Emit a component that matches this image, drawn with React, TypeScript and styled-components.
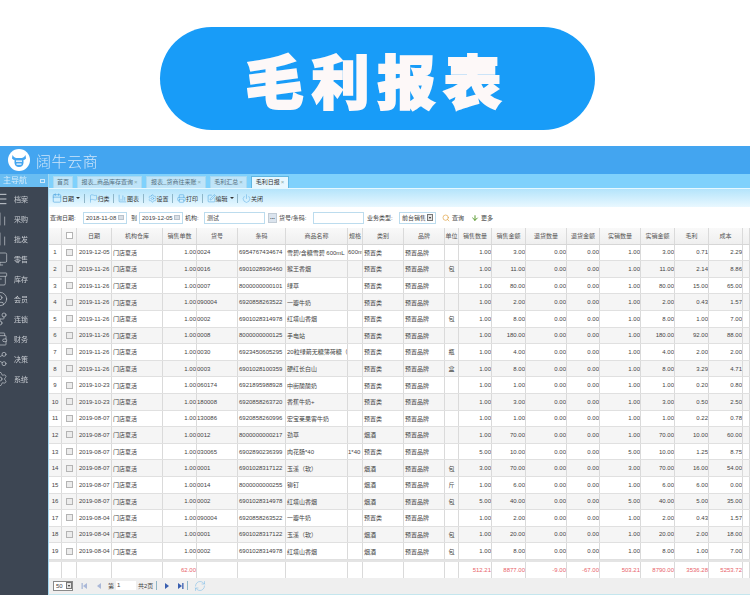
import React from "react";
import styled, { createGlobalStyle } from "styled-components";
import { Calendar, Flag, ChartColumn, Settings, Printer, SquarePen, Power, Search, ArrowDown, RefreshCw, AlignJustify, Monitor, Archive, CircleUser, Share2, Wallet, GitFork, ChartNoAxesColumn } from "lucide-react";

const Global = createGlobalStyle`
  html, body { margin: 0; padding: 0; background: #fff; }
  body { font-family: "Liberation Sans", "Noto Sans CJK SC", sans-serif; }
  * { box-sizing: border-box; }
`;

const Page = styled.div`
  width: 750px;
  height: 609px;
  overflow: hidden;
  background: #fff;
`;
const Banner = styled.div`
  height: 146px;
  padding: 27px 0 0 160px;
`;
const Pill = styled.div`
  width: 435px;
  height: 103px;
  border-radius: 52px;
  background: #189cf8;
  color: #fdf8f8;
  display: flex;
  align-items: center;
  justify-content: center;
  font: 900 58px/1 "Noto Sans CJK SC", sans-serif;
  letter-spacing: 8px;
  -webkit-text-stroke: 2px #fdf8f8;
`;
const Shell = styled.div`
  filter: blur(0.4px);
  font-size: 6px;
  color: #444;
`;
const Header = styled.div`
  height: 28px;
  background: #43a5f0;
  display: flex;
  align-items: center;
  padding-left: 8px;
  gap: 6px;
`;
const LogoText = styled.div`
  font: 300 15px/1 "Noto Sans CJK SC", sans-serif;
  letter-spacing: 0.6px;
  color: #cfe6fa;
`;
const Body = styled.div`
  display: flex;
  height: 421px;
`;
const SideCol = styled.div`
  width: 48px;
  flex: none;
  display: flex;
  flex-direction: column;
`;
const SideHead = styled.div`
  height: 13px;
  background: #69bdf2;
  color: #d5ecfb;
  font-size: 8px;
  line-height: 13px;
  padding-left: 3px;
  display: flex;
  align-items: center;
  justify-content: space-between;
  padding-right: 3px;
`;
const SideBox = styled.span`
  width: 5px;
  height: 4px;
  border: 1px solid #cfe8fa;
`;
const SideMenu = styled.div`
  flex: 1;
  background: #3d4653;
  padding-top: 1.5px;
`;
const SideItem = styled.div`
  height: 20.1px;
  display: flex;
  align-items: center;
  gap: 6px;
  color: #c9cdd3;
  font-size: 7px;
  overflow: hidden;
  svg { margin-left: -8px; flex: none; }
`;
const Main = styled.div`
  flex: 1;
  min-width: 0;
  border-left: 1px solid #a4d8f2;
  border-bottom: 1px solid #c4e6ee;
  display: flex;
  flex-direction: column;
`;
const TabStrip = styled.div`
  height: 14px;
  background: #7fd1fc;
  display: flex;
  align-items: flex-end;
  gap: 4px;
  padding-left: 4px;
`;
const Tab = styled.div<{ $w: number; $active?: boolean }>`
  width: ${(p) => p.$w}px;
  height: 12px;
  text-align: center;
  white-space: nowrap;
  color: ${(p) => (p.$active ? "#333" : "#55707f")};
  background: ${(p) => (p.$active ? "#e6f7ff" : "#bfe4f8")};
  border: 1px solid ${(p) => (p.$active ? "#5fb6e0" : "#a8d9f2")};
  border-bottom: 0;
  line-height: 10px;
`;
const TabX = styled.span`
  color: #8aa;
  margin-left: 1px;
`;
const Toolbar = styled.div`
  height: 19px;
  border-top: 1px solid #e6f8ff;
  background: linear-gradient(#b4e4fb, #e9f8ff);
  display: flex;
  align-items: center;
  padding-left: 3px;
  color: #333;
`;
const Tool = styled.div`
  display: flex;
  align-items: center;
  svg { flex: none; }
`;
const Caret = styled.span`
  width: 0;
  height: 0;
  margin-left: 2px;
  border: 2px solid transparent;
  border-top: 2.5px solid #333;
  border-bottom: 0;
`;
const Sep = styled.span`
  width: 1px;
  height: 9px;
  background: #8fb6c8;
  margin: 0 ${(p: { $m?: number }) => p.$m ?? 4}px 0 ${(p: { $m?: number }) => p.$m ?? 3.5}px;
`;
const Filter = styled.div`
  height: 21px;
  background: #fff;
  display: flex;
  align-items: center;
  padding-left: 1px;
  color: #444;
`;
const Label = styled.span<{ $ml?: number; $w?: number }>`
  margin-left: ${(p) => p.$ml ?? 0}px;
  width: ${(p) => (p.$w ? `${p.$w}px` : "auto")};
  white-space: nowrap;
`;
const Field = styled.div<{ $w: number; $ml?: number }>`
  width: ${(p) => p.$w}px;
  margin-left: ${(p) => p.$ml ?? 0}px;
  height: 12px;
  border: 1px solid #bcdcee;
  background: #fff;
  display: flex;
  align-items: center;
  justify-content: space-between;
  padding: 0 2px;
  white-space: nowrap;
`;
const DateIcon = styled.span`
  width: 6px;
  height: 5px;
  background: #d9dee4;
  border: 1px solid #b8c2cc;
`;
const DotsBtn = styled.span`
  width: 9px;
  height: 10px;
  margin-left: 3px;
  background: #dbe4ee;
  border: 1px solid #c2ccd6;
  color: #345;
  text-align: center;
  line-height: 6px;
  font-weight: bold;
`;
const DropBtn = styled.span`
  width: 6px;
  height: 7px;
  background: #e4e4e4;
  border: 1px solid #777;
  display: flex;
  align-items: center;
  justify-content: center;
  &::after {
    content: "";
    border: 1.5px solid transparent;
    border-top: 2px solid #222;
    border-bottom: 0;
  }
`;
const Action = styled.div<{ $ml: number }>`
  margin-left: ${(p) => p.$ml}px;
  display: flex;
  align-items: center;
  gap: 2px;
  color: #444;
`;

const cols = "13px 15px 35px 51px 34px 41px 48px 62px 15px 41px 41px 14px 33px 34px 41px 33px 41px 34px 34px 34px 7px";

const HeadRow = styled.div`
  height: 16.6px;
  display: grid;
  grid-template-columns: ${cols};
  background: linear-gradient(#f9f9f9, #efefef);
  border-bottom: 1px solid #d6d6d6;
`;
const Row = styled.div<{ $alt: boolean }>`
  height: 16.6px;
  display: grid;
  grid-template-columns: ${cols};
  background: ${(p) => (p.$alt ? "#f5f5f5" : "#fff")};
  border-bottom: 1px solid #e0e0e0;
`;
const Total = styled.div`
  height: 18px;
  display: grid;
  grid-template-columns: ${cols};
  background: #fff;
  border-top: 2px solid #e4e4e4;
  color: #e8636b;
`;
const Cell = styled.div<{ $a?: "l" | "c" | "r"; $pl?: number }>`
  border-right: 1px solid #dadada;
  display: flex;
  align-items: center;
  justify-content: ${(p) => (p.$a === "r" ? "flex-end" : p.$a === "c" ? "center" : "flex-start")};
  padding-left: ${(p) => p.$pl ?? 0}px;
  white-space: nowrap;
  overflow: hidden;
  min-width: 0;
`;
const HeadCell = styled(Cell)`
  color: #555;
  justify-content: center;
`;
const Check = styled.span<{ $head?: boolean }>`
  width: 7px;
  height: 7px;
  border: 1px solid #b4b4b4;
  background: ${(p) => (p.$head ? "#fff" : "#ececec")};
`;
const Pager = styled.div`
  height: 16px;
  background: #efefef;
  display: flex;
  align-items: center;
  padding-left: 4px;
  color: #444;
`;
const PageField = styled.div`
  width: 20px;
  height: 9px;
  background: #fff;
  padding-left: 1px;
  margin: 0 2px 0 2px;
  line-height: 9px;
`;
const SizeSelect = styled.div`
  width: 20px;
  height: 10px;
  border: 1px solid #8a8a8a;
  background: #fff;
  display: flex;
  align-items: center;
  justify-content: space-between;
  padding-left: 2px;
`;
const PageIcon = styled.svg<{ $ml: number }>`
  margin-left: ${(p) => p.$ml}px;
  flex: none;
`;
const Refresh = styled(RefreshCw)`
  margin-left: 3px;
  flex: none;
`;

const TBLUE = "#3d9bdc";
const ICO = { size: 16, color: "#c9cdd3", strokeWidth: 1 };
const sideItems: [string, React.ReactNode][] = [
  ["档案", <AlignJustify key="a" {...ICO} strokeWidth={1.5} />],
  ["采购", <ChartNoAxesColumn key="b" {...ICO} />],
  ["批发", <ChartNoAxesColumn key="c" {...ICO} />],
  ["零售", <Monitor key="d" {...ICO} />],
  ["库存", <Archive key="e" {...ICO} />],
  ["会员", <CircleUser key="f" {...ICO} />],
  ["连锁", <GitFork key="g" {...ICO} />],
  ["财务", <Wallet key="h" {...ICO} />],
  ["决策", <Share2 key="i" {...ICO} />],
  ["系统", <Settings key="j" {...ICO} />],
];

const heads = ["", "", "日期", "机构仓库", "销售单数", "货号", "条码", "商品名称", "规格", "类别", "品牌", "单位", "销售数量", "销售金额", "退货数量", "退货金额", "实销数量", "实销金额", "毛利", "成本", ""];

type D = [string, string, string, string, string, string, string, string, string, string, string];
const P = "预置类", Y = "烟酒";
const data: D[] = [
  ["2019-12-05", "0024", "6954767434674", "雪碧/含糖雪碧 600mL", "600m", P, "", "1.00", "3.00", "0.71", "2.29"],
  ["2019-11-26", "0016", "6901028936460", "猴王香烟", "", P, "包", "1.00", "11.00", "2.14", "8.86"],
  ["2019-11-26", "0007", "8000000000101", "绿草", "", P, "", "1.00", "80.00", "15.00", "65.00"],
  ["2019-11-26", "090004", "6920858263522", "一瓣牛奶", "", P, "", "1.00", "2.00", "0.43", "1.57"],
  ["2019-11-26", "0002", "6901028314978", "红塔山香烟", "", P, "包", "1.00", "8.00", "1.00", "7.00"],
  ["2019-11-26", "0008", "8000000000125", "手电站", "", P, "", "1.00", "180.00", "92.00", "88.00"],
  ["2019-11-26", "0030", "6923450605295", "20粒绿箭无糖薄荷糖（", "", P, "瓶", "1.00", "4.00", "2.00", "2.00"],
  ["2019-11-26", "0003", "6901028100359", "硬红长白山", "", P, "盒", "1.00", "8.00", "3.29", "4.71"],
  ["2019-10-23", "060174", "6921895988928", "中街酸酸奶", "", P, "", "1.00", "1.00", "0.20", "0.80"],
  ["2019-10-23", "180008", "6920858263720", "香蕉牛奶+", "", P, "", "1.00", "3.00", "0.50", "2.50"],
  ["2019-08-07", "130086", "6920858260996", "宏宝莱果客牛奶", "", P, "", "1.00", "1.00", "0.22", "0.78"],
  ["2019-08-07", "0012", "8000000000217", "劲草", "", Y, "", "1.00", "70.00", "10.00", "60.00"],
  ["2019-08-07", "030065", "6902890236399", "肉花肠*40", "1*40", P, "", "5.00", "10.00", "1.25", "8.75"],
  ["2019-08-07", "0001", "6901028317122", "玉溪（软）", "", Y, "包", "3.00", "70.00", "16.00", "54.00"],
  ["2019-08-07", "0014", "8000000000255", "铆钉", "", Y, "斤", "1.00", "6.00", "6.00", "0.00"],
  ["2019-08-07", "0002", "6901028314978", "红塔山香烟", "", Y, "包", "5.00", "40.00", "5.00", "35.00"],
  ["2019-08-04", "090004", "6920858263522", "一瓣牛奶", "", P, "", "1.00", "2.00", "0.43", "1.57"],
  ["2019-08-04", "0001", "6901028317122", "玉溪（软）", "", Y, "包", "1.00", "20.00", "2.00", "18.00"],
  ["2019-08-04", "0002", "6901028314978", "红塔山香烟", "", Y, "包", "1.00", "8.00", "1.00", "7.00"],
];
const totals: Record<number, string> = { 4: "62.00", 12: "512.21", 13: "8877.00", 14: "-9.00", 15: "-67.00", 16: "503.21", 17: "8790.00", 18: "3536.28", 19: "5253.72" };

const Logo = () => (
  <svg width="22" height="22" viewBox="0 0 22 22">
    <circle cx="11" cy="11" r="11" fill="#fff" />
    <path d="M4.5 6 Q6 9 8 9 H14 Q16 9 17.500 6 L18 9.500 Q16.500 11 15.500 11 V14 Q15 18 11 18 Q7 18 6.500 14 V11 Q5.500 11 4 9.500 Z" fill="#43a5f0" />
    <rect x="8" y="11.500" width="6" height="1.300" fill="#fff" />
    <rect x="8.500" y="14.500" width="5" height="1.200" fill="#fff" />
  </svg>
);

const Tri = ({ ml, flip, bar, color }: { ml: number; flip?: boolean; bar?: boolean; color: string }) => (
  <PageIcon $ml={ml} width="7" height="8" viewBox="0 0 7 8">
    <g transform={flip ? "translate(7 0) scale(-1 1)" : undefined} fill={color}>
      <path d="M1 1 L5 4 L1 7 Z" />
      {bar && <rect x="5.200" y="1" width="1.300" height="6" />}
    </g>
  </PageIcon>
);

export default function App() {
  return (
    <Page>
      <Global />
      <Banner>
        <Pill>毛利报表</Pill>
      </Banner>
      <Shell>
        <Header>
          <Logo />
          <LogoText>阔牛云商</LogoText>
        </Header>
        <Body>
          <SideCol>
            <SideHead>
              主导航
              <SideBox />
            </SideHead>
            <SideMenu>
              {sideItems.map(([t, icon]) => (
                <SideItem key={t}>
                  {icon}
                  {t}
                </SideItem>
              ))}
            </SideMenu>
          </SideCol>
          <Main>
            <TabStrip>
              <Tab $w={20}>首页</Tab>
              <Tab $w={65}>报表_商品库存查询<TabX>×</TabX></Tab>
              <Tab $w={60}>报表_货商往来账<TabX>×</TabX></Tab>
              <Tab $w={37}>毛利汇总<TabX>×</TabX></Tab>
              <Tab $w={38} $active>毛利日报<TabX>×</TabX></Tab>
            </TabStrip>
            <Toolbar>
              <Tool><Calendar size={10} color={TBLUE} strokeWidth={1.3} />日期<Caret /></Tool>
              <Sep />
              <Tool><Flag size={9} color={TBLUE} strokeWidth={1.1} />归类</Tool>
              <Sep />
              <Tool><ChartColumn size={9} color={TBLUE} strokeWidth={1.3} />图表</Tool>
              <Sep />
              <Tool><Settings size={9} color={TBLUE} strokeWidth={1.1} />设置</Tool>
              <Sep />
              <Tool><Printer size={9} color={TBLUE} strokeWidth={1.3} />打印</Tool>
              <Sep />
              <Tool><SquarePen size={9} color={TBLUE} strokeWidth={1.3} />编辑<Caret /></Tool>
              <Sep />
              <Tool><Power size={9} color={TBLUE} strokeWidth={1.1} />关闭</Tool>
            </Toolbar>
            <Filter>
              <Label $w={33}>查询日期:</Label>
              <Field $w={44}>2018-11-08<DateIcon /></Field>
              <Label $ml={4} $w={8}>到</Label>
              <Field $w={44}>2019-12-05<DateIcon /></Field>
              <Label $ml={2} $w={19}>机构:</Label>
              <Field $w={61}>测试</Field>
              <DotsBtn>...</DotsBtn>
              <Label $ml={2} $w={34}>货号/条码:</Label>
              <Field $w={51} />
              <Label $ml={3} $w={32}>业务类型:</Label>
              <Field $w={37}>前台销售<DropBtn /></Field>
              <Action $ml={6}><Search size={8} color="#e0a040" strokeWidth={2} />查询</Action>
              <Action $ml={7}><ArrowDown size={8} color="#5a9a30" strokeWidth={3} />更多</Action>
            </Filter>
            <HeadRow>
              {heads.map((h, i) => (
                <HeadCell key={i}>{i === 1 ? <Check $head /> : h}</HeadCell>
              ))}
            </HeadRow>
            {data.map((d, i) => (
              <Row key={i} $alt={i % 2 === 1}>
                <Cell $a="c">{i + 1}</Cell>
                <Cell $a="c"><Check /></Cell>
                <Cell $pl={2}>{d[0]}</Cell>
                <Cell $pl={1}>门店夏活</Cell>
                <Cell $a="r">1.00</Cell>
                <Cell $pl={0}>{d[1]}</Cell>
                <Cell $pl={1}>{d[2]}</Cell>
                <Cell $pl={1}>{d[3]}</Cell>
                <Cell>{d[4]}</Cell>
                <Cell $pl={1}>{d[5]}</Cell>
                <Cell $pl={1}>预置品牌</Cell>
                <Cell $a="c">{d[6]}</Cell>
                <Cell $a="r">{d[7]}</Cell>
                <Cell $a="r">{d[8]}</Cell>
                <Cell $a="r">0.00</Cell>
                <Cell $a="r">0.00</Cell>
                <Cell $a="r">{d[7]}</Cell>
                <Cell $a="r">{d[8]}</Cell>
                <Cell $a="r">{d[9]}</Cell>
                <Cell $a="r">{d[10]}</Cell>
                <Cell />
              </Row>
            ))}
            <Total>
              {heads.map((_, i) => (
                <Cell key={i} $a="r">{totals[i] ?? ""}</Cell>
              ))}
            </Total>
            <Pager>
              <SizeSelect>50<DropBtn /></SizeSelect>
              <Tri ml={8} flip bar color="#aab8d8" />
              <Tri ml={7} flip color="#aab8d8" />
              <Label $ml={6}>第</Label>
              <PageField>1</PageField>
              <Label>共2页</Label>
              <Sep $m={3} />
              <Tri ml={4} color="#3a5fb0" />
              <Tri ml={6} bar color="#3a5fb0" />
              <Sep $m={3} />
              <Refresh size={12} color="#7cbce8" strokeWidth={1.1} />
            </Pager>
          </Main>
        </Body>
      </Shell>
    </Page>
  );
}
